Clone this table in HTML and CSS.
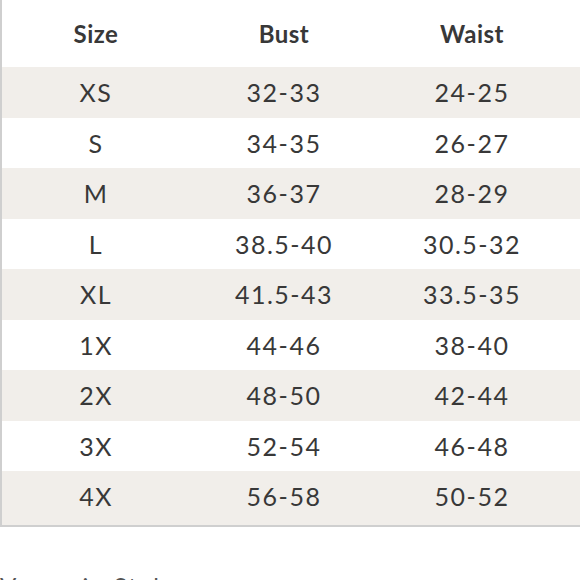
FILE: index.html
```html
<!DOCTYPE html>
<html>
<head>
<meta charset="utf-8">
<link rel="stylesheet" href="styles.css">
</head>
<body>
<div class="chart">
  <div class="row head"><div>Size</div><div>Bust</div><div>Waist</div></div>
  <div class="row alt"><div>XS</div><div>32-33</div><div>24-25</div></div>
  <div class="row"><div>S</div><div>34-35</div><div>26-27</div></div>
  <div class="row alt"><div>M</div><div>36-37</div><div>28-29</div></div>
  <div class="row"><div>L</div><div>38.5-40</div><div>30.5-32</div></div>
  <div class="row alt"><div>XL</div><div>41.5-43</div><div>33.5-35</div></div>
  <div class="row"><div>1X</div><div>44-46</div><div>38-40</div></div>
  <div class="row alt"><div>2X</div><div>48-50</div><div>42-44</div></div>
  <div class="row"><div>3X</div><div>52-54</div><div>46-48</div></div>
  <div class="row alt last"><div>4X</div><div>56-58</div><div>50-52</div></div>
</div>
<div class="footer">Venus in Style</div>
</body>
</html>
```
FILE: styles.css
```css
html, body {
  margin: 0;
  padding: 0;
  background: #fff;
  overflow: hidden;
  width: 580px;
  height: 580px;
}
body {
  font-family: Lato, "Open Sans", sans-serif;
  color: #383838;
}
.chart {
  width: 600px;
  border-left: 2px solid #cfcfcf;
  border-bottom: 2px solid #cfcfcf;
}
.row {
  display: grid;
  grid-template-columns: 188px 188px 188px;
  box-sizing: border-box;
  height: 50.5px;
  align-items: center;
  text-align: center;
  font-size: 25px;
  letter-spacing: 1.5px;
}
.row.alt {
  background: #f1eeea;
}
.row.head {
  height: 67px;
  font-weight: 700;
  font-size: 24px;
  letter-spacing: 0.5px;
}
.row.last {
  height: 54px;
  padding-bottom: 4px;
}
.footer {
  margin-top: 44px;
  font-size: 24px;
  color: #555;
  letter-spacing: 2px;
}
```
